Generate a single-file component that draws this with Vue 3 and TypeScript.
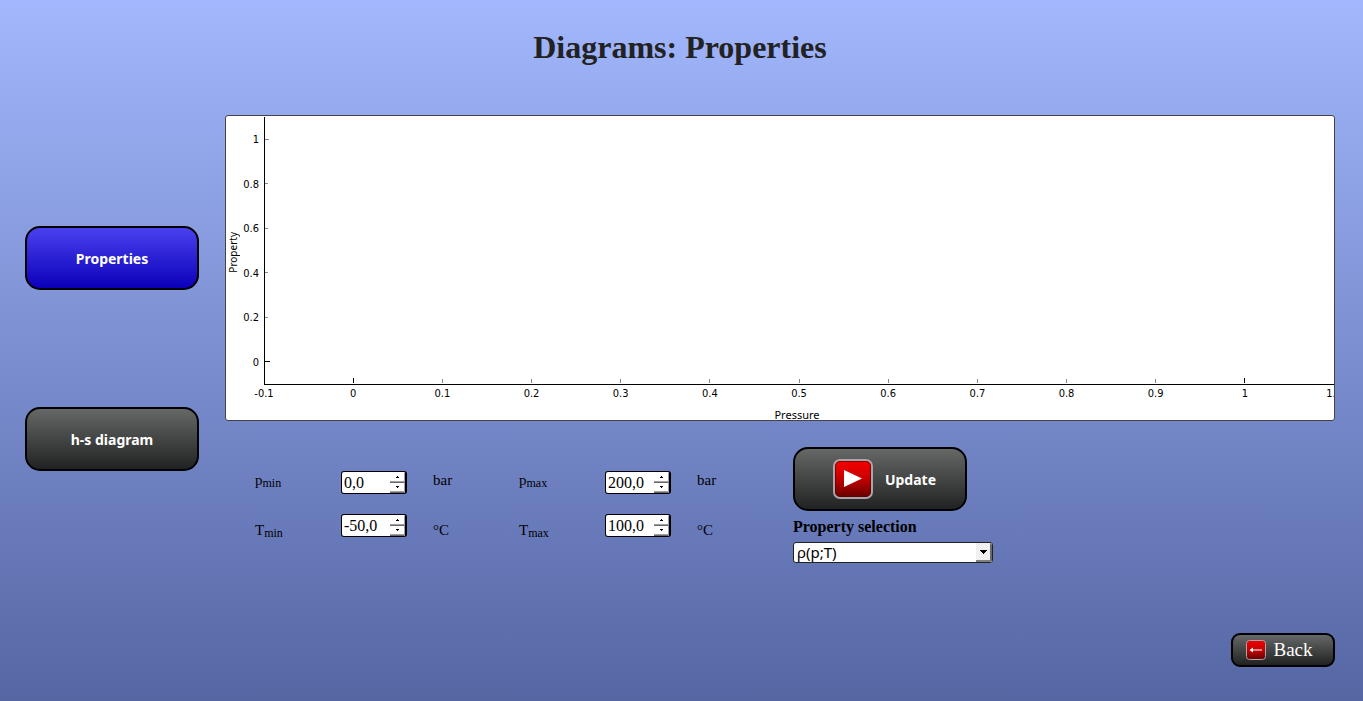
<script setup lang="ts">
import { reactive, ref } from 'vue'

interface Limit {
  id: string
  symbol: string
  bound: string
  unit: string
  value: string
  low: boolean
}

const limits = reactive<Limit[]>([
  { id: 'p-min', symbol: 'p', bound: 'min', unit: 'bar', value: '0,0', low: false },
  { id: 'p-max', symbol: 'p', bound: 'max', unit: 'bar', value: '200,0', low: false },
  { id: 't-min', symbol: 'T', bound: 'min', unit: '°C', value: '-50,0', low: true },
  { id: 't-max', symbol: 'T', bound: 'max', unit: '°C', value: '100,0', low: true },
])

const selected = ref('rho')

const xTicks = ['-0.1', '0', '0.1', '0.2', '0.3', '0.4', '0.5', '0.6', '0.7', '0.8', '0.9', '1', '1.1'].map(
  (label, i) => ({ label, at: `${(i / 12) * 100}%`, size: i === 0 || i === 12 ? 0 : label === '0' || label === '1' ? 6 : 5, strong: label === '0' || label === '1' }),
)
const yTicks = [1, 0.8, 0.6, 0.4, 0.2, 0].map((v) => ({
  label: String(v),
  at: `${((1.1 - v) / 1.2) * 100}%`,
  size: v === 0 ? 6 : v === 1 ? 5 : 4,
  strong: v === 0,
}))

function step(limit: Limit, delta: number): void {
  const next = parseFloat(limit.value.replace(',', '.')) + delta
  limit.value = next.toFixed(1).replace('.', ',')
}
</script>

<template>
  <div class="page">
    <h1 class="title">Diagrams: Properties</h1>
    <div class="body">
      <nav class="side">
        <button type="button" class="btn active">Properties</button>
        <button type="button" class="btn">h-s diagram</button>
      </nav>
      <main class="main">
        <figure class="chart">
          <div class="y-name"><span>Property</span></div>
          <svg class="plot" role="img" aria-label="Property over pressure">
            <line class="axis" x1="0" y1="0" x2="0" y2="100%" />
            <line class="axis" x1="0" y1="100%" x2="100%" y2="100%" />
            <svg v-for="t in yTicks" :key="'y' + t.label" x="0" :y="t.at" class="mark">
              <line :class="t.strong ? 'axis' : 'tick'" x1="1" y1="0" :x2="t.size" y2="0" />
              <text x="-5" y="4" text-anchor="end">{{ t.label }}</text>
            </svg>
            <svg v-for="t in xTicks" :key="'x' + t.label" :x="t.at" y="100%" class="mark">
              <line v-if="t.size" :class="t.strong ? 'axis' : 'tick'" x1="0" y1="-1" x2="0" :y2="-t.size" />
              <text x="0" y="13" text-anchor="middle">{{ t.label }}</text>
            </svg>
          </svg>
          <figcaption class="x-name">Pressure</figcaption>
        </figure>

        <div class="controls">
          <form class="limits" @submit.prevent>
            <div v-for="l in limits" :key="l.id" class="limit" :class="{ low: l.low }">
              <label :for="l.id" class="name">{{ l.symbol }}<span class="sub">{{ l.bound }}</span></label>
              <div class="spin">
                <input :id="l.id" v-model="l.value" type="text" />
                <div class="steps">
                  <button type="button" aria-label="Increase" @click="step(l, 1)">
                    <svg width="3" height="2"><path d="M1 0h1v1h1v1H0V1h1z" /></svg>
                  </button>
                  <button type="button" aria-label="Decrease" @click="step(l, -1)">
                    <svg width="3" height="2"><path d="M0 0h3v1H2v1H1V1H0z" /></svg>
                  </button>
                </div>
              </div>
              <span class="unit">{{ l.unit }}</span>
            </div>
          </form>

          <div class="actions">
            <button type="button" class="btn update">
              <svg width="40" height="40" viewBox="0 0 40 40">
                <defs>
                  <linearGradient id="red-large" x1="0" y1="0" x2="0" y2="1">
                    <stop offset="0" stop-color="#f80000" />
                    <stop offset="0.45" stop-color="#cc0000" />
                    <stop offset="1" stop-color="#620000" />
                  </linearGradient>
                </defs>
                <rect x="1" y="1" width="38" height="38" rx="6" fill="url(#red-large)" stroke="#a9a5aa" stroke-width="2" />
                <rect x="2.5" y="2.5" width="35" height="35" rx="5" fill="none" stroke="#5c0000" stroke-opacity="0.7" />
                <path d="M11 11v17l18-8.500z" fill="#fff" />
              </svg>
              <span>Update</span>
            </button>
            <label for="property" class="caption">Property selection</label>
            <div class="combo">
              <select id="property" v-model="selected">
                <option value="rho">ρ(p;T)</option>
              </select>
              <span class="drop"><svg width="7" height="4"><path d="M0 0h7v1H6v1H5v1H4v1H3V3H2V2H1V1H0z" /></svg></span>
            </div>
          </div>
        </div>
      </main>
    </div>
    <footer class="foot">
      <button type="button" class="btn back">
        <svg width="20" height="20" viewBox="0 0 20 20">
          <defs>
            <linearGradient id="red-small" x1="0" y1="0" x2="0" y2="1">
              <stop offset="0" stop-color="#f00000" />
              <stop offset="0.5" stop-color="#c80000" />
              <stop offset="1" stop-color="#650000" />
            </linearGradient>
          </defs>
          <rect x="0.500" y="0.500" width="19" height="19" rx="3" fill="url(#red-small)" stroke="#a9a5aa" />
          <path d="M7 10h9" stroke="#ddb5b5" stroke-width="1.500" />
          <path d="M3.500 10L7 7.500v5z" fill="#fff" />
        </svg>
        <span>Back</span>
      </button>
    </footer>
  </div>
</template>

<style>
body {
  margin: 0;
}
</style>

<style scoped>
.page {
  box-sizing: border-box;
  min-height: 100vh;
  padding: 27px 28px 34px 25px;
  display: flex;
  flex-direction: column;
  background: linear-gradient(#a2b7fd, #5566a3);
  font-family: "Liberation Serif", serif;
  font-size: 15px;
  color: #000;
}
.title {
  margin: 0 0 48px;
  font-size: 32px;
  line-height: 40px;
  text-align: center;
  color: #222;
}
.body {
  display: grid;
  grid-template-columns: 174px minmax(0, 1fr);
  gap: 26px;
  flex: 1;
}
.side {
  display: flex;
  flex-direction: column;
  gap: 117px;
  padding-top: 111px;
}
.btn {
  box-sizing: border-box;
  width: 174px;
  height: 64px;
  padding: 2px 0 0;
  border: 2px solid #000;
  border-radius: 15px;
  background: linear-gradient(#666867, #212322);
  color: #fff;
  font: bold 14px/20px "Noto Sans", sans-serif;
  display: flex;
  align-items: center;
  justify-content: center;
}
.btn.active {
  background: linear-gradient(#4a41ee, #0b00b8);
}
.chart {
  margin: 0;
  padding-top: 1px;
  border: 1px solid #444;
  border-radius: 3px;
  background: #fff;
  overflow: hidden;
  display: grid;
  grid-template-columns: 38px minmax(0, 1fr);
  grid-template-rows: 267px 36px;
}
.plot {
  display: block;
  width: 100%;
  height: 267px;
  overflow: visible;
  font: 11px "DejaVu Sans Condensed", "DejaVu Sans", sans-serif;
  font-stretch: condensed;
  shape-rendering: crispEdges;
}
.mark {
  overflow: visible;
}
.axis {
  stroke: #000;
}
.tick {
  stroke: #888;
}
.y-name {
  display: flex;
  align-items: center;
  padding-top: 4px;
}
.y-name span {
  writing-mode: vertical-rl;
  transform: rotate(180deg);
  font: 10px/14px "Noto Sans", sans-serif;
}
.x-name {
  grid-column: 1 / -1;
  align-self: end;
  padding-left: 34px;
  text-align: center;
  font: 11px/11px "Noto Sans", sans-serif;
}
.controls {
  display: flex;
  padding-top: 26px;
}
.limits {
  display: grid;
  grid-template-columns: 264px 264px;
  grid-auto-rows: 23px;
  gap: 20px 0;
  padding: 24px 10px 0 30px;
}
.limit {
  display: grid;
  grid-template-columns: 86px 66px 1fr;
  line-height: 18px;
}
.low .name,
.low .unit {
  padding-top: 7px;
}
.unit {
  padding-left: 26px;
}
.sub {
  position: relative;
  top: 2px;
  font-size: 12px;
}
.spin {
  box-sizing: border-box;
  height: 23px;
  display: flex;
  border: 1px solid #000;
  border-right-width: 2px;
  border-radius: 3px;
  background: #fff;
  overflow: hidden;
}
.spin input {
  flex: 1;
  min-width: 0;
  padding: 0 0 0 2px;
  border: 0;
  background: none;
  font: 16px/21px "Liberation Serif", serif;
  outline: 0;
}
.steps {
  width: 15px;
  display: flex;
  flex-direction: column;
}
.steps button {
  flex: 1;
  display: flex;
  align-items: center;
  justify-content: center;
  padding: 0;
  border: 0;
  border-right: 1px solid #a0a0a0;
  border-bottom: 1px solid #696969;
  background: #fff;
  box-shadow: inset 0 -1px #a0a0a0;
}
.actions {
  display: flex;
  flex-direction: column;
  align-items: flex-start;
}
.update {
  gap: 12px;
  padding: 0 0 0 9px;
}
.update span {
  padding-top: 2px;
}
.caption {
  margin: 6px 0 5px;
  font-size: 16px;
  font-weight: bold;
  line-height: 20px;
}
.combo {
  box-sizing: border-box;
  width: 200px;
  height: 21px;
  display: grid;
  grid-template-columns: 1fr 16px;
  border: 1px solid #222;
  border-radius: 3px;
  background: #fff;
  overflow: hidden;
}
.combo select {
  grid-area: 1 / 1 / 2 / 3;
  appearance: none;
  padding: 0 18px 0 3px;
  border: 0;
  background: none;
  font: 15px/19px "Noto Sans", sans-serif;
  color: #000;
}
.drop {
  grid-area: 1 / 2;
  display: flex;
  align-items: center;
  justify-content: center;
  background: #f0f0f0;
  border-right: 2px solid #696969;
  border-bottom: 2px solid #808080;
  pointer-events: none;
}
.foot {
  display: flex;
  justify-content: flex-end;
}
.back {
  width: 104px;
  height: 34px;
  padding: 0 7px 0 0;
  border-radius: 9px;
  gap: 7px;
  font: 19px/22px "Liberation Serif", serif;
}
</style>
